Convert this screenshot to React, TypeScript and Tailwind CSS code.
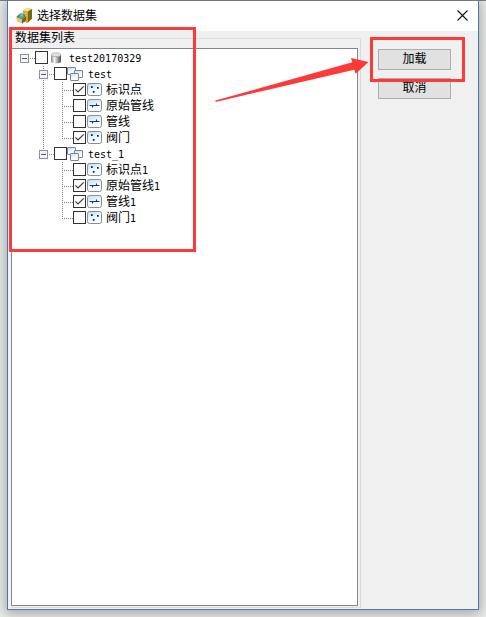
import React from "react";

type Kind = "db" | "group" | "point" | "line";
type Row = { label: string; level: 0 | 1 | 2; kind: Kind; checked?: boolean; last?: boolean; trunk?: boolean };

const rows: Row[] = [
  { label: "test20170329", level: 0, kind: "db" },
  { label: "test", level: 1, kind: "group" },
  { label: "标识点", level: 2, kind: "point", checked: true, trunk: true },
  { label: "原始管线", level: 2, kind: "line", trunk: true },
  { label: "管线", level: 2, kind: "line", trunk: true },
  { label: "阀门", level: 2, kind: "point", checked: true, trunk: true, last: true },
  { label: "test_1", level: 1, kind: "group", last: true },
  { label: "标识点1", level: 2, kind: "point" },
  { label: "原始管线1", level: 2, kind: "line", checked: true },
  { label: "管线1", level: 2, kind: "line", checked: true },
  { label: "阀门1", level: 2, kind: "point", last: true },
];

function Dots({ d }: { d: string }) {
  return <path d={d} stroke="#808080" strokeDasharray="1 1" fill="none" />;
}

function Connector({ row }: { row: Row }) {
  const w = 23 + row.level * 19;
  const ex = 8 + row.level * 19;
  return (
    <svg width={w} height="16" viewBox={`0 0 ${w} 16`} className="shrink-0" shapeRendering="crispEdges">
      {row.trunk && <Dots d="M31.5 0V16" />}
      {row.level === 2 ? (
        <>
          <Dots d={row.last ? "M50.5 0V8" : "M50.5 0V16"} />
          <Dots d="M50 8.5H61" />
        </>
      ) : (
        <>
          {row.level === 1 && <Dots d={row.last ? "M31.5 0V4" : "M31.5 0V16"} />}
          <Dots d={`M${ex + 10} 8.5H${w}`} />
          <rect x={ex + 0.5} y="4.5" width="8" height="8" fill="#f4f4f4" stroke="#919191" />
          <path d={`M${ex + 2} 8.5h5`} stroke="#3d5fa8" />
        </>
      )}
    </svg>
  );
}

function Check({ on }: { on?: boolean }) {
  return (
    <svg width="13" height="13" viewBox="0 0 13 13" className="mt-px shrink-0 self-start">
      <rect x=".5" y=".5" width="12" height="12" fill="#fff" stroke="#333" />
      {on && <path d="M2.300 6.300 5 9 10.700 3.300" fill="none" stroke="#3c3c3c" strokeWidth="1.200" />}
    </svg>
  );
}

function KindIcon({ kind }: { kind: Kind }) {
  return (
    <svg width="16" height="16" viewBox="0 0 16 16" className="shrink-0">
      <defs>
        <linearGradient id="cyl">
          <stop offset="0" stopColor="#8a8a8a" />
          <stop offset=".35" stopColor="#f2f2f2" />
          <stop offset="1" stopColor="#4b4b4b" />
        </linearGradient>
        <linearGradient id="sky" x2="0.4" y2="1">
          <stop offset="0" stopColor="#b5ddf5" />
          <stop offset=".6" stopColor="#eef8fe" />
          <stop offset="1" stopColor="#fff" />
        </linearGradient>
      </defs>
      {kind === "db" && (
        <>
          <path d="M3 4.500v7.300c0 2.200 10 2.200 10 0V4.500z" fill="url(#cyl)" />
          <ellipse cx="8" cy="4.700" rx="4.800" ry="1.900" fill="#e0e3e3" stroke="#a2a5a5" strokeWidth=".7" />
        </>
      )}
      {kind === "group" && (
        <g fill="url(#sky)" stroke="#858585">
          <rect x=".5" y="1.500" width="8" height="7" rx=".5" />
          <rect x="7.500" y="4.500" width="8" height="7" rx=".5" />
          <rect x="3.500" y="7.500" width="8" height="7" rx=".5" />
        </g>
      )}
      {(kind === "point" || kind === "line") && (
        <rect x="1.500" y="1.500" width="14" height="12" rx="2" fill="url(#sky)" stroke="#83909a" />
      )}
      {kind === "point" && (
        <path d="M5 4.200h1.700v1.700H5zM11 5h1.700v1.700H11zM6.800 9h1.700v1.700H6.800z" fill="#202020" />
      )}
      {kind === "line" && (
        <path d="M3.500 7.500h10M6.500 7v2.500M10.500 5.500v2.500" fill="none" stroke="#333" strokeWidth="1.100" />
      )}
    </svg>
  );
}

function AppIcon() {
  return (
    <svg width="18" height="18" viewBox="0 0 18 18" className="shrink-0">
      <path d="M8 3.500 12.500 1 17 2v9.500L12.500 16 8 14.500z" fill="#c9a832" />
      <path d="M8 3.500 12.500 1 17 2l-4 2.500z" fill="#f3e38f" />
      <path d="M13 4.500 17 2v9.500L13 15.500z" fill="#7d6312" />
      <path d="M9.500 6h2.200M9.500 8.500h2.200" stroke="#e9d476" />
      <path d="m1.500 9.500 4-3 5 2 .5 4.500-3.500 3.500-5.500-2.500z" fill="#b8952a" />
      <path d="m2 9.500 3.500-3 5 2-3.500 3.500z" fill="#3a6474" />
      <circle cx="6.500" cy="9" r="2.700" fill="#3b9fd0" />
      <path d="M5 8c1-1.500 2.500-1 3 0s-1.500 2.500-2.500 1.500z" fill="#74cf7b" />
      <path d="m1.500 10.500 5.500 2v3.500l-5-2z" fill="#e6cf61" />
      <path d="m7 12.500 4-3v3.500l-4 3.500z" fill="#75601e" />
    </svg>
  );
}

function Button({ children }: { children: React.ReactNode }) {
  return (
    <button className="flex h-[21px] w-[73px] items-center justify-center border border-[#adadad] bg-[#e1e1e1] text-xs leading-none">
      <span className="-mt-px">{children}</span>
    </button>
  );
}

export default function App() {
  return (
    <div className="relative h-[617px] w-[486px] overflow-hidden border-t border-[#777] bg-[#eceeed] pl-[7px] font-['Liberation_Sans','Noto_Sans_CJK_SC',sans-serif] text-black">
      <main className="-mt-px flex h-[610px] w-[472px] flex-col border border-[#4a78b5] bg-[#f0f0f0] shadow-[0_2px_12px_2px_rgba(0,0,0,0.3)]">
        <header className="flex h-[30px] shrink-0 items-center bg-white pl-[7px] pr-[10px]">
          <AppIcon />
          <h1 className="ml-1 grow text-xs leading-none">选择数据集</h1>
          <svg width="11" height="11" viewBox="0 0 11 11" className="-mt-[2px]">
            <path d="M.5.5l10 10M10.500.5l-10 10" stroke="#111" strokeWidth="1.100" />
          </svg>
        </header>
        <div className="flex min-h-0 grow">
          <fieldset className="flex w-[352px] flex-col pl-[3px]">
            <div className="flex h-[17px] w-[350px] shrink-0 items-start text-xs leading-[14px]">
              <span className="pl-1">数据集列表</span>
              <span className="ml-1 mt-[7px] h-[10px] grow border-r border-t border-[#dcdcdc]" />
            </div>
            <div className="flex h-[560px] w-[350px] border-b border-r border-[#dcdcdc]">
              <ul className="h-[558px] w-[347px] border border-[#828790] bg-white pt-px">
                {rows.map((row) => (
                  <li key={row.label} className="flex h-4 items-center">
                    <Connector row={row} />
                    <Check on={row.checked} />
                    <KindIcon kind={row.kind} />
                    {row.level === 2 ? (
                      <span className="ml-1 flex whitespace-pre text-xs leading-4">
                        {row.label.replace("1", "")}
                        {row.label.endsWith("1") && (
                          <span className="mt-px font-['DejaVu_Sans_Mono',monospace] text-[10px] leading-4">1</span>
                        )}
                      </span>
                    ) : (
                      <span className="ml-[5px] mt-[2px] whitespace-pre font-['DejaVu_Sans_Mono',monospace] text-[10px] leading-4">
                        {row.label}
                      </span>
                    )}
                  </li>
                ))}
              </ul>
            </div>
          </fieldset>
          <div className="flex flex-col gap-2 pl-[17px] pt-[18px]">
            <Button>加载</Button>
            <Button>取消</Button>
          </div>
        </div>
      </main>
      <div className="absolute left-[9px] top-[26px] h-[225px] w-[187px] border-3 border-[#fc3a39]" />
      <div className="absolute left-[370px] top-[36px] h-[45px] w-[95px] border-3 border-[#fc3a39]" />
      <svg className="absolute left-[215px] top-[56px]" width="155" height="46" viewBox="0 1 155 46">
        <path d="M.5 44.500L137.300 6.300 136 2 153.500 6 140.700 17.700 139.300 13.700.5 46z" fill="#fc3a39" />
      </svg>
    </div>
  );
}
